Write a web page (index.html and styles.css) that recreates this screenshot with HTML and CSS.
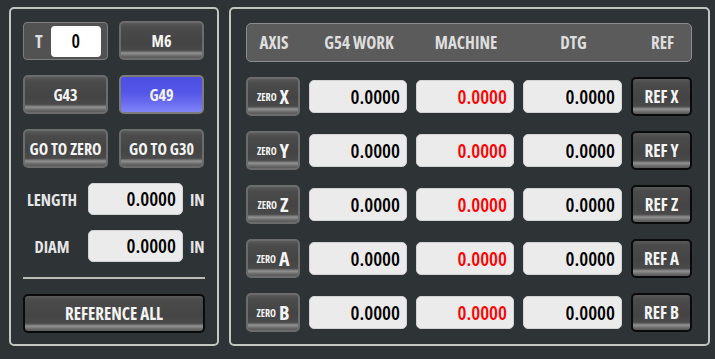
FILE: index.html
```html
<!DOCTYPE html>
<html lang="en">
<head>
  <meta charset="UTF-8">
  <title>DRO Panel</title>
  <link rel="stylesheet" href="styles.css">
</head>
<body>
  <div class="panel tool-panel">
    <div class="pair">
      <div class="tool-box"><span class="tool-label">T</span><span class="tool-num">0</span></div>
      <button class="btn">M6</button>
    </div>
    <div class="pair">
      <button class="btn">G43</button>
      <button class="btn active">G49</button>
    </div>
    <div class="pair">
      <button class="btn">GO TO ZERO</button>
      <button class="btn">GO TO G30</button>
    </div>
    <div class="tool-row">
      <span class="row-label">LENGTH</span>
      <div class="field">0.0000</div>
      <span class="unit">IN</span>
    </div>
    <div class="tool-row">
      <span class="row-label">DIAM</span>
      <div class="field">0.0000</div>
      <span class="unit">IN</span>
    </div>
    <div class="divider"></div>
    <button class="btn dark">REFERENCE ALL</button>
  </div>

  <div class="panel dro-panel">
    <div class="dro-head">
      <span>AXIS</span>
      <span>G54 WORK</span>
      <span>MACHINE</span>
      <span>DTG</span>
      <span>REF</span>
    </div>
    <div id="dro-rows"></div>
  </div>

  <script>
    const axes = ["X", "Y", "Z", "A", "B"];
    const rows = document.getElementById("dro-rows");
    axes.forEach(axis => {
      const row = document.createElement("div");
      row.className = "dro-row";
      row.innerHTML = `
        <button class="btn zero"><small>ZERO</small>${axis}</button>
        <div class="field">0.0000</div>
        <div class="field red">0.0000</div>
        <div class="field">0.0000</div>
        <button class="btn dark">REF ${axis}</button>
      `;
      rows.appendChild(row);
    });
  </script>
</body>
</html>
```
FILE: styles.css
```css
body {
  margin: 0;
  height: 359px;
  box-sizing: border-box;
  padding: 7px 5px 13px 9px;
  display: flex;
  gap: 10px;
  background: #2e3336;
  font-family: "Open Sans", sans-serif;
  font-stretch: 75%;
  font-weight: 700;
  color: #f2f2f2;
}

.panel {
  border: 2px solid #c3c6be;
  border-radius: 5px;
  box-sizing: border-box;
}

.tool-panel {
  width: 210px;
  padding: 12px 12px 0 12px;
  display: flex;
  flex-direction: column;
  gap: 15px;
}

.pair {
  display: grid;
  grid-template-columns: 85px 85px;
  gap: 11px;
}

.btn {
  height: 39px;
  margin: 0;
  padding: 0;
  border: 2px solid #6c6c6c;
  border-radius: 5px;
  background: linear-gradient(#5a5a5a 0, #4b4b4b 12%, #444 55%, #4a4a4a 78%, #929292 86%, #6a6a6a 94%, #585858 100%);
  color: #f4f4f4;
  font-family: inherit;
  font-stretch: 75%;
  font-weight: 700;
  font-size: 16px;
  box-sizing: border-box;
}

.btn.active {
  border-color: #7c7c7c;
  background: linear-gradient(#4c4ee4 0, #5557e8 45%, #6e71f1 80%, #8084f6 100%);
}

.btn.dark {
  border-color: #0a0a0a;
  font-size: 17px;
}

.tool-box {
  height: 38px;
  box-sizing: border-box;
  margin-top: 1px;
  border: 1px solid #7d7d7d;
  border-radius: 4px;
  background: #525252;
  display: flex;
  align-items: center;
  padding: 0 6px 0 11px;
  gap: 8px;
}

.tool-label {
  font-size: 18px;
  color: #dedede;
}

.tool-num {
  flex: 1;
  height: 31px;
  border-radius: 4px;
  background: #fff;
  color: #000;
  font-size: 19px;
  font-weight: 600;
  display: flex;
  align-items: center;
  justify-content: center;
}

.tool-row {
  height: 32px;
  display: grid;
  grid-template-columns: 58px 95px auto;
  gap: 7px;
  align-items: center;
}

.row-label {
  text-align: center;
  font-size: 16.5px;
  color: #e6e6e6;
}

.unit {
  font-size: 16.5px;
  color: #e6e6e6;
}

.field {
  height: 32px;
  box-sizing: border-box;
  border: 1px solid #d2d2d2;
  border-radius: 5px;
  background: #ebebeb;
  color: #000;
  font-size: 20px;
  font-weight: 600;
  text-align: right;
  padding-right: 6px;
  line-height: 30px;
}

.field.red {
  color: #ff0000;
}

.divider {
  height: 2px;
  background: #b9bcb4;
}

.dro-panel {
  width: 481px;
  padding: 14px 16px 0 15px;
}

.dro-head,
.dro-row {
  display: grid;
  grid-template-columns: 54px 98px 98px 99px 61px;
  gap: 9px;
  align-items: center;
}

.dro-head {
  height: 39px;
  box-sizing: border-box;
  border: 1px solid #8c8c8c;
  border-radius: 5px;
  background: #5b5b5b;
  color: #dedede;
  font-size: 17px;
  text-align: center;
}

#dro-rows {
  display: flex;
  flex-direction: column;
  gap: 15px;
  margin-top: 15px;
}

.dro-row {
  height: 39px;
}

.dro-row .field {
  height: 33px;
  line-height: 31px;
}

.btn.zero {
  font-size: 20px;
}

.btn.zero small {
  font-size: 10px;
  margin-right: 3px;
  vertical-align: 3px;
}
```
